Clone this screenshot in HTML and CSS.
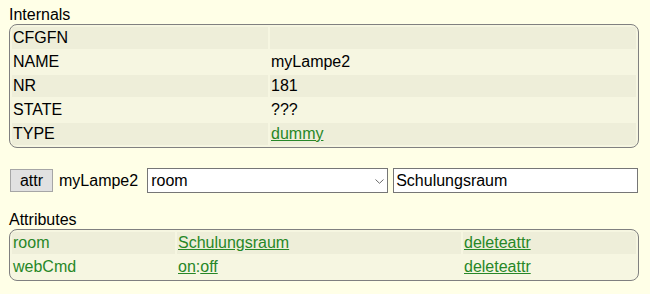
FILE: index.html
```html
<!DOCTYPE html>
<html lang="en">
  <head>
    <meta charset="utf-8" />
    <title>myLampe2</title>
    <link rel="stylesheet" href="styles.css">
  </head>
  <body>
    <div id="content">
      <div class="makeTable">Internals</div>
      <table class="block internals">
        <tr class="odd">
          <td class="col1">CFGFN</td>
          <td></td>
        </tr>
        <tr class="even">
          <td class="col1">NAME</td>
          <td>myLampe2</td>
        </tr>
        <tr class="odd">
          <td class="col1">NR</td>
          <td>181</td>
        </tr>
        <tr class="even">
          <td class="col1">STATE</td>
          <td>???</td>
        </tr>
        <tr class="odd">
          <td class="col1">TYPE</td>
          <td><a href="#">dummy</a></td>
        </tr>
      </table>

      <form class="attrForm" onsubmit="return false;">
        <button type="button" class="attrButton">attr</button>
        <span class="devName">myLampe2</span>
        <span class="selectWrap">
          <select class="attrSelect">
            <option>room</option>
            <option>webCmd</option>
          </select>
          <svg class="selectArrow" width="9" height="5" viewBox="0 0 9 5">
            <path d="M0.5 0.5 L4.5 4.3 L8.5 0.5" fill="none" stroke="#6b6b6b" stroke-width="1" />
          </svg>
        </span>
        <input class="attrValue" type="text" value="Schulungsraum" />
      </form>

      <div class="makeTable">Attributes</div>
      <table class="block attributes">
        <tr class="odd">
          <td class="col1">room</td>
          <td class="col2"><a href="#">Schulungsraum</a></td>
          <td><a href="#">deleteattr</a></td>
        </tr>
        <tr class="even">
          <td class="col1">webCmd</td>
          <td class="col2"><a href="#">on</a>:<a href="#">off</a></td>
          <td><a href="#">deleteattr</a></td>
        </tr>
      </table>
    </div>
  </body>
</html>
```

FILE: styles.css
```css
body {
  margin: 0;
  padding: 0;
  background: #ffffe7;
  color: #000;
  font-family: "Liberation Sans", Arial, sans-serif;
  font-size: 16px;
}

a {
  color: #278727;
}

#content {
  padding: 6px 0 0 9px;
}

.makeTable {
  line-height: 18px;
}

table.block {
  width: 630px;
  table-layout: fixed;
  border: 1px solid #808080;
  border-radius: 8px;
  border-spacing: 2px;
  background: #f6f6e1;
}

table.block td {
  box-sizing: border-box;
  height: 22px;
  padding: 2px 1px;
  line-height: 18px;
  white-space: nowrap;
  overflow: hidden;
}

tr.odd td {
  background: #eeeed9;
}

.internals .col1 {
  width: 256px;
}

.attributes td {
  color: #278727;
}

.attributes .col1 {
  width: 163px;
}

.attributes .col2 {
  width: 284px;
}

.attrForm {
  display: flex;
  align-items: center;
  height: 25px;
  margin: 20px 0 18px 0;
}

.attrButton {
  box-sizing: border-box;
  width: 43px;
  height: 23px;
  margin: 0 6px 0 1px;
  padding: 0;
  border: 1px solid #a6a6a6;
  background: #e1e1e1;
  color: #000;
  font-family: inherit;
  font-size: 16px;
}

.devName {
  margin-right: 9px;
}

.selectWrap {
  position: relative;
  display: block;
  height: 25px;
  margin-right: 5px;
}

.attrSelect {
  -webkit-appearance: none;
  appearance: none;
  box-sizing: border-box;
  width: 241px;
  height: 25px;
  margin: 0;
  padding: 0 0 0 3px;
  border: 1px solid #767676;
  border-radius: 0;
  background: #fff;
  color: #000;
  font-family: inherit;
  font-size: 16px;
}

.selectArrow {
  position: absolute;
  top: 11px;
  left: 228px;
  pointer-events: none;
}

.attrValue {
  box-sizing: border-box;
  width: 245px;
  height: 25px;
  margin: 0;
  padding: 0 2px;
  border: 1px solid #767676;
  background: #fff;
  color: #000;
  font-family: inherit;
  font-size: 16px;
}
```
